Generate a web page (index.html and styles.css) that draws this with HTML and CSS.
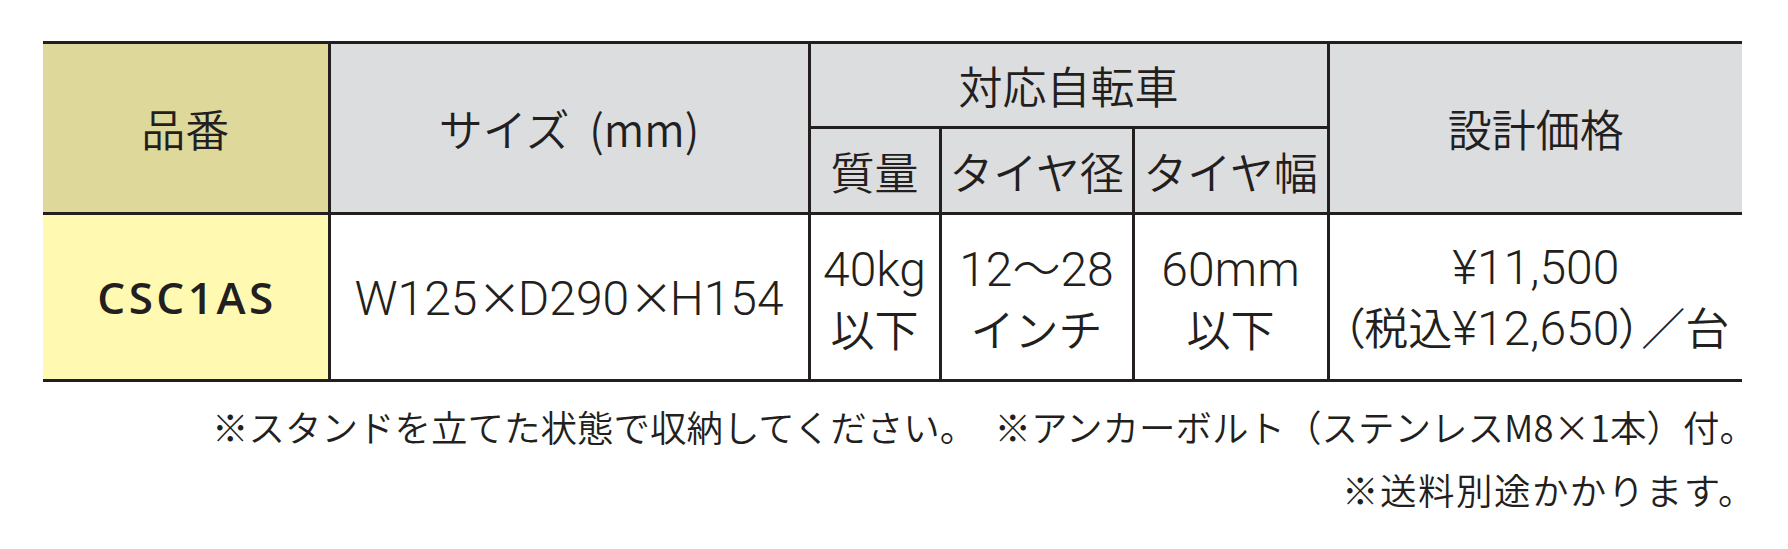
FILE: index.html
```html
<!DOCTYPE html>
<html lang="ja">
<head>
<meta charset="utf-8">
<title>CSC1AS 仕様</title>
<link rel="stylesheet" href="styles.css">
</head>
<body>
<div class="sheet">
  <table class="spec">
    <colgroup>
      <col class="col-code">
      <col class="col-size">
      <col class="col-weight">
      <col class="col-dia">
      <col class="col-width">
      <col class="col-price">
    </colgroup>
    <thead>
      <tr class="head-top">
        <th rowspan="2" class="code-head">品番</th>
        <th rowspan="2">サイズ<span class="paren">(</span>mm)</th>
        <th colspan="3">対応自転車</th>
        <th rowspan="2">設計価格</th>
      </tr>
      <tr class="head-sub">
        <th>質量</th>
        <th>タイヤ径</th>
        <th>タイヤ幅</th>
      </tr>
    </thead>
    <tbody>
      <tr class="body-row">
        <td class="code">CSC1AS</td>
        <td><span class="num">W125<span class="times">×</span>D290<span class="times">×</span>H154</span></td>
        <td><span class="num">40kg</span><br>以下</td>
        <td><span class="num">12～28</span><br>インチ</td>
        <td><span class="num">60mm</span><br>以下</td>
        <td class="price"><span class="num">¥11,500</span><br><span class="tax">（税込<span class="num">¥12,650</span>）／台</span></td>
      </tr>
    </tbody>
  </table>
  <div class="notes">
    <p>※スタンドを立てた状態で収納してください。　※アンカーボルト（ステンレスM8×1本）付。</p>
    <p class="note-ship">※送料別途かかります。</p>
  </div>
</div>
</body>
</html>
```
FILE: styles.css
```css
html, body {
  margin: 0;
  padding: 0;
  background: #ffffff;
}

body {
  color: #231f20;
  font-family: "Noto Sans CJK JP", "Noto Sans", sans-serif;
  font-weight: 350;
}

.sheet {
  padding: 41px 46px 0 43px;
  width: 1699px;
}

.spec {
  width: 1699px;
  table-layout: fixed;
  border-collapse: collapse;
}

.col-code { width: 286px; }
.col-size { width: 480px; }
.col-weight { width: 131px; }
.col-dia { width: 193px; }
.col-width { width: 195px; }
.col-price { width: 414px; }

.spec th,
.spec td {
  border: 3px solid #231f1f;
  padding: 0;
  text-align: center;
  vertical-align: middle;
  font-weight: 350;
  font-size: 44px;
  white-space: nowrap;
}

.spec tr > :first-child { border-left: none; }
.spec tr > :last-child { border-right: none; }
.head-sub > :last-child { border-right: 3px solid #231f1f; }

.spec th {
  background: #dcdddf;
  line-height: 1;
}

.spec th.code-head {
  background: #dfd89b;
}

.paren {
  margin-left: 0.45em;
}

.head-top { height: 85px; }
.head-sub { height: 86px; }
.body-row { height: 167px; }

.spec td {
  line-height: 58px;
  background: #ffffff;
}

.spec td.code {
  background: #fff9b1;
  font-family: "Open Sans", "Noto Sans", sans-serif;
  font-weight: 600;
  font-size: 44px;
  letter-spacing: 0.08em;
  padding-left: 0.08em;
}

.num {
  font-family: Roboto, "Noto Sans CJK JP", sans-serif;
  font-weight: 300;
  font-size: 48px;
}

.times {
  display: inline-block;
  width: 0.92em;
  text-align: center;
  font-family: "Noto Sans CJK JP", sans-serif;
  font-weight: 350;
  font-size: 44px;
}

.tax {
  font-feature-settings: "palt";
}

.notes {
  margin-top: 13px;
  margin-right: -14px;
  text-align: right;
  font-size: 36.5px;
  line-height: 63px;
}

.notes p {
  margin: 0;
  white-space: nowrap;
}

.notes .note-ship {
  letter-spacing: 0.04em;
}
```
